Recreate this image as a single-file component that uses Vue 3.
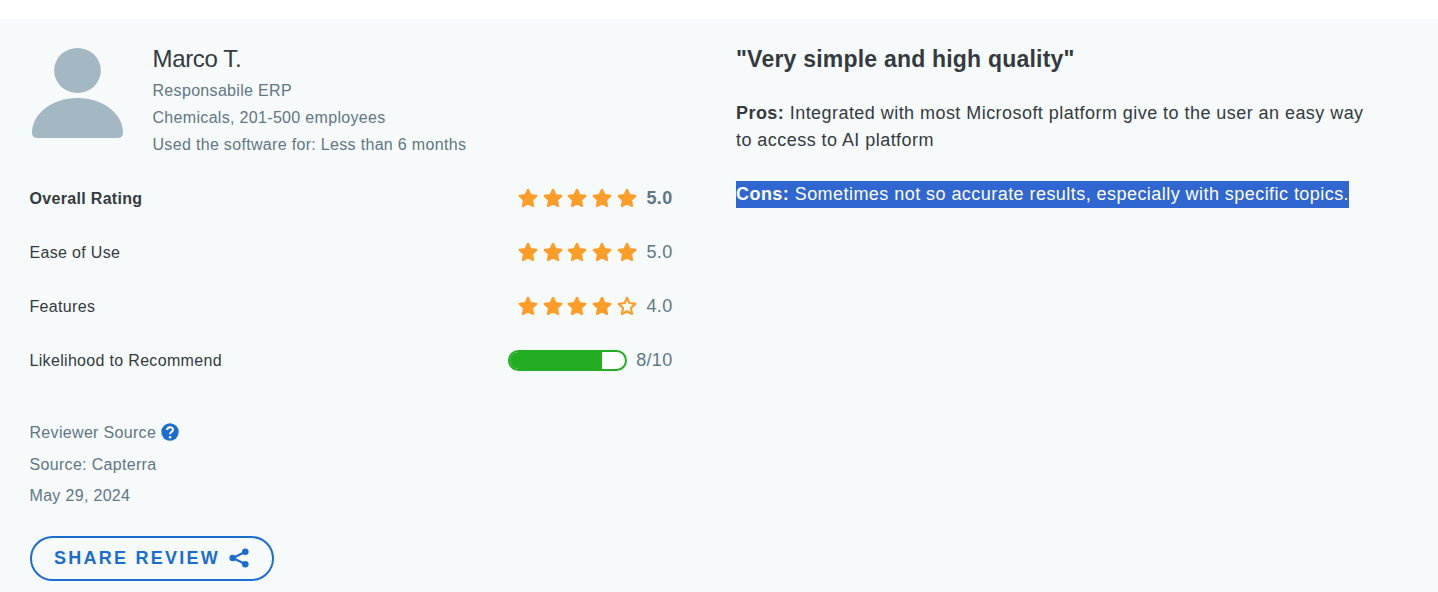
<script setup>
    import { ref } from "vue"
    const reviewer = ref({
        name: "Marco T.",
        details: ["Responsabile ERP", "Chemicals, 201-500 employees", "Used the software for: Less than 6 months"],
    })
    const ratings = ref([
        { label: "Overall Rating", value: 5, bold: true },
        { label: "Ease of Use", value: 5 },
        { label: "Features", value: 4 },
    ])
    const recommend = ref(8)
</script>

<template>
    <div class="review">
        <div class="left">
            <div class="reviewer">
                <svg class="avatar" viewBox="0 0 91 90">
                    <ellipse cx="45.5" cy="22.5" rx="23.4" ry="22.5" />
                    <path d="M45.500 50C71 50 91 66 91 84.500Q91 90 85.500 90H5.500Q0 90 0 84.500C0 66 20 50 45.500 50Z" />
                </svg>
                <div class="info">
                    <div class="name">{{ reviewer.name }}</div>
                    <div class="detail" v-for="(line, index) in reviewer.details" :key="index">{{ line }}</div>
                </div>
            </div>

            <div class="row" :class="{ bold: item.bold }" v-for="item in ratings" :key="item.label">
                <span class="label">{{ item.label }}</span>
                <div class="score">
                    <div class="stars">
                        <svg v-for="n in 5" :key="n" class="star" :class="{ empty: n > item.value }" viewBox="0 0 20 20">
                            <path d="M10 1.800L12.400 7L18.300 7.900L14 12L15 18L10 15.200L5 18L6 12L1.700 7.900L7.600 7Z" />
                        </svg>
                    </div>
                    <span class="value">{{ item.value.toFixed(1) }}</span>
                </div>
            </div>
            <div class="row">
                <span class="label">Likelihood to Recommend</span>
                <div class="score">
                    <div class="bar">
                        <div class="fill" :style="{ width: recommend * 10 + '%' }"></div>
                    </div>
                    <span class="value">{{ recommend }}/10</span>
                </div>
            </div>

            <div class="source">
                <div class="line first">
                    Reviewer Source
                    <svg class="help" viewBox="0 0 18 18">
                        <circle cx="9" cy="9" r="8.700" fill="#1c6dd0" />
                        <path d="M6.100 7C6.100 3.300 12 3.300 12 6.700C12 8.800 9.100 8.700 9.100 11.200" fill="none" stroke="#fff" stroke-width="2" />
                        <circle cx="9.100" cy="14.200" r="1.200" fill="#fff" />
                    </svg>
                </div>
                <div class="line">Source: Capterra</div>
                <div class="line">May 29, 2024</div>
            </div>

            <button class="share">
                SHARE REVIEW
                <svg class="shareIcon" viewBox="0 0 20 20">
                    <path d="M16.300 3.700L4 10L16.300 16.300" fill="none" stroke="#1c6dd0" stroke-width="2.100" />
                    <circle cx="16.300" cy="3.700" r="3.300" />
                    <circle cx="3.700" cy="10" r="3.300" />
                    <circle cx="16.300" cy="16.300" r="3.300" />
                </svg>
            </button>
        </div>

        <div class="right">
            <h3 class="title">"Very simple and high quality"</h3>
            <p><b>Pros:</b> Integrated with most Microsoft platform give to the user an easy way to access to AI platform</p>
            <p><span class="selected"><b>Cons:</b> Sometimes not so accurate results, especially with specific topics.</span></p>
        </div>
    </div>
</template>

<style>
    body {
        background-color: #fff;
    }
</style>

<style scoped>
    .review {
        box-sizing: border-box;
        display: flex;
        height: 573px;
        margin-top: 19px;
        padding: 26px 30px 0 29.500px;
        overflow: hidden;
        background-color: #f6fafb;
        color: #343a40;
        font-family: "Liberation Sans", Arial, sans-serif;
        font-size: 16px;
        letter-spacing: 0.320px;
    }

    .left {
        width: 643px;
        margin-right: 63.500px;
    }

    .reviewer {
        display: flex;
        height: 126px;
    }

    .avatar {
        width: 91px;
        height: 90px;
        margin: 3px 29.500px 0 2.500px;
        fill: #a3b8c3;
    }

    .name {
        font-size: 24px;
        line-height: 27px;
        letter-spacing: -0.350px;
        margin-bottom: 5px;
    }

    .detail {
        line-height: 27px;
        color: #617785;
    }

    .row {
        display: flex;
        align-items: center;
        justify-content: space-between;
        height: 54px;
    }

    .row.bold {
        font-weight: bold;
    }

    .label {
        padding-top: 2px;
    }

    .score {
        display: flex;
        align-items: center;
    }

    .stars {
        display: flex;
        gap: 4.750px;
        margin-right: 0.600px;
    }

    .star {
        width: 20px;
        height: 20px;
        fill: #ff9d28;
        stroke: #ff9d28;
        stroke-width: 2.200;
        stroke-linejoin: round;
    }

    .star.empty {
        fill: #fff;
    }

    .value {
        margin-left: 9px;
        font-size: 18px;
        color: #617785;
    }

    .bar {
        box-sizing: border-box;
        width: 119px;
        height: 21px;
        border: 2px solid #23ad23;
        border-radius: 11px;
        background-color: #fff;
        overflow: hidden;
    }

    .fill {
        height: 100%;
        background-color: #23ad23;
    }

    .source {
        margin-top: 30px;
        color: #617785;
    }

    .line {
        line-height: 31.500px;
    }

    .line.first {
        display: flex;
        align-items: center;
        gap: 5px;
    }

    .help {
        width: 18px;
        height: 18px;
        margin-top: -1px;
    }

    .share {
        box-sizing: border-box;
        display: flex;
        align-items: center;
        width: 244px;
        height: 45px;
        margin: 24px 0 0 0.500px;
        padding: 0 22px;
        gap: 9px;
        border: 2px solid #1c6dd0;
        border-radius: 23px;
        background-color: transparent;
        color: #1c6dd0;
        font-family: inherit;
        font-size: 18px;
        font-weight: bold;
        letter-spacing: 2.250px;
        white-space: nowrap;
    }

    .shareIcon {
        width: 20px;
        height: 20px;
        fill: #1c6dd0;
    }

    .right {
        width: 643px;
        font-size: 18px;
        line-height: 27px;
        letter-spacing: 0.450px;
    }

    .title {
        margin: 0 0 27px;
        padding-top: 1px;
        font-size: 23px;
        letter-spacing: 0.210px;
    }

    .right p {
        margin: 0 0 27px;
    }

    .selected {
        display: inline-block;
        background-color: #3066d0;
        color: #fff;
    }
</style>
